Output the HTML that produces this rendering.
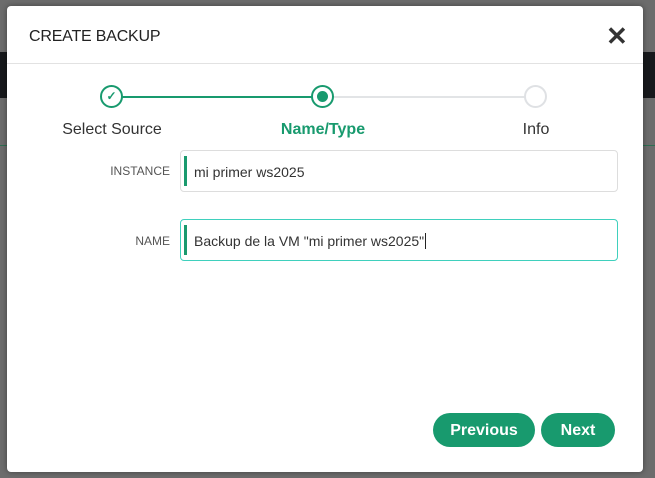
<!DOCTYPE html>
<html><head><meta charset="utf-8"><style>
*{box-sizing:border-box;margin:0;padding:0}
body{width:655px;height:478px;overflow:hidden;background:#6c6c6c;font-family:"Liberation Sans",sans-serif;position:relative}
.band{position:absolute;left:0;right:0;top:52px;height:46px;background:#17191c}
.gl{position:absolute;left:0;right:0;top:145px;height:1px;background:#2f6e52}
.modal{position:absolute;left:7px;top:6px;width:636px;height:466px;background:#fff;border-radius:4px;box-shadow:0 0 6px rgba(0,0,0,.4)}
.title{position:absolute;left:22px;top:22px;font-size:16px;color:#222;letter-spacing:-0.2px}
.close{position:absolute;left:599px;top:15px;font-size:26px;font-weight:bold;color:#333}
.hr{position:absolute;left:0;right:0;top:57px;height:1px;background:#e2e2e2}
.line{position:absolute;top:90px;height:2px}
.c{position:absolute;top:79px;width:23px;height:23px;border-radius:50%;background:#fff}
.lbl{position:absolute;top:115px;font-size:16px;color:#333;transform:translateX(-50%);white-space:nowrap}
.flab{position:absolute;font-size:12px;color:#555;text-align:right;width:160px;left:3px}
.inp{position:absolute;left:173px;width:438px;height:42px;border:1px solid #ddd;border-radius:4px}
.inp .bar{position:absolute;left:3px;top:5px;width:3px;height:30px;background:#1a9a6e}
.inp span{position:absolute;left:13px;top:13px;font-size:14px;color:#333}
.btn{position:absolute;top:407px;height:34px;border-radius:17px;background:#189a6e;color:#fff;font-size:16px;font-weight:bold;text-align:center;line-height:36px}
</style></head><body>
<div class="band"></div><div class="gl"></div>
<div class="modal">
<div class="title">CREATE BACKUP</div>
<div class="close">✕</div>
<div class="hr"></div>
<div class="line" style="left:115px;width:200px;background:#189a6e"></div>
<div class="line" style="left:315px;width:214px;background:#e2e4e6"></div>
<div class="c" style="left:93px;border:2px solid #189a6e;color:#189a6e;font-size:12px;font-weight:bold;text-align:center;line-height:19px">✓</div>
<div class="c" style="left:304px;border:2px solid #189a6e"><div style="position:absolute;left:4px;top:4px;width:11px;height:11px;border-radius:50%;background:#189a6e"></div></div>
<div class="c" style="left:517px;border:2px solid #dfe1e4"></div>
<div class="lbl" style="left:105px">Select Source</div>
<div class="lbl" style="left:316px;color:#189a6e;font-weight:bold">Name/Type</div>
<div class="lbl" style="left:529px">Info</div>
<div class="flab" style="top:158px">INSTANCE</div>
<div class="inp" style="top:144px"><div class="bar"></div><span>mi primer ws2025</span></div>
<div class="flab" style="top:228px">NAME</div>
<div class="inp" style="top:213px;border-color:#3fd0bd"><div class="bar"></div><span>Backup de la VM "mi primer ws2025"<span style="position:static;border-left:1px solid #222;margin-left:1px"></span></span></div>
<div class="btn" style="left:426px;width:102px">Previous</div>
<div class="btn" style="left:534px;width:74px">Next</div>
</div>
</body></html>
